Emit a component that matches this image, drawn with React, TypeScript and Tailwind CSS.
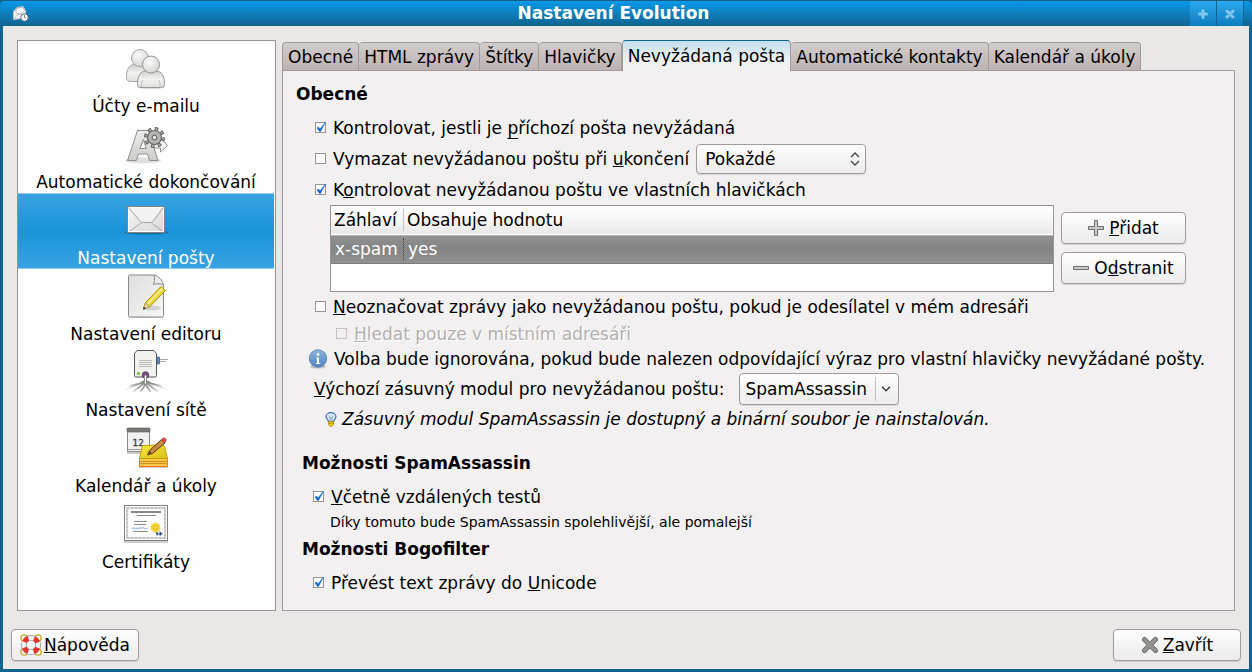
import { useId, useState, type ReactNode } from "react";

function Mnemonic({ text, at }: { text: string; at: number }) {
  const letter = text.charAt(at);
  const hasDescender = "gjpqy".includes(letter);
  return (
    <>
      {text.slice(0, at)}
      <u
        className={
          hasDescender
            ? "underline decoration-1 underline-offset-4 [text-decoration-skip-ink:none]"
            : "underline decoration-1 underline-offset-1 [text-decoration-skip-ink:none]"
        }
      >
        {letter}
      </u>
      {text.slice(at + 1)}
    </>
  );
}

/* ---------- sidebar icons ---------- */

function AccountsIcon() {
  return (
    <svg viewBox="2 -1 48 48" className="size-12" aria-hidden="true">
      <defs>
        <linearGradient id="acc-body" x1="0" y1="0" x2="0" y2="1">
          <stop offset="0" stopColor="#cfcfcd" />
          <stop offset=".5" stopColor="#f2f2f1" />
          <stop offset="1" stopColor="#dededc" />
        </linearGradient>
        <radialGradient id="acc-head" cx=".4" cy=".35" r=".7">
          <stop offset="0" stopColor="#fafafa" />
          <stop offset="1" stopColor="#d4d4d1" />
        </radialGradient>
      </defs>
      <ellipse cx="31" cy="42" rx="14" ry="2" fill="#000" opacity=".15" />
      <path d="M11 36.500c-3 0-4.500-1-4.500-4C6.500 25 9 19.500 14 19.500h9c5 0 7 5 7 13 0 3-1 4-4 4z" fill="url(#acc-body)" stroke="#a9a7a5" />
      <circle cx="20" cy="13" r="8.500" fill="url(#acc-head)" stroke="#a9a7a5" />
      <path d="M21 42.500c-3 0-3.500-1.500-3.500-4 0-7 3-12.500 8-12.500h11c5 0 8 5.500 8 12.500 0 2.500-1 4-4 4z" fill="url(#acc-body)" stroke="#989694" />
      <path d="M21.500 42c-.5-4 .5-6 1.500-7M40 42c.5-4-.5-6-1.500-7" fill="none" stroke="#c0bfbd" />
      <circle cx="31" cy="19.500" r="8.500" fill="url(#acc-head)" stroke="#989694" />
    </svg>
  );
}

function AutocompleteIcon() {
  return (
    <svg viewBox="2 -1 48 48" className="size-12" aria-hidden="true">
      <defs>
        <linearGradient id="auto-a" x1="0" y1="0" x2="0" y2="1">
          <stop offset="0" stopColor="#eeeeec" />
          <stop offset="1" stopColor="#cbcdc9" />
        </linearGradient>
      </defs>
      <ellipse cx="23" cy="39.500" rx="18" ry="3" fill="#000" opacity=".13" />
      <path d="M34 20.500h6.500v-3.500l7 7.500-7 6.500v-4H34" fill="#f4f4f2" stroke="#8f918d" />
      <path fillRule="evenodd" d="M7.500 39.500 17.500 9.500h11l9.500 30h-8.500l-2-6.500H18.500l-2 6.500zM20 27.500h6l-2.500-9z" fill="url(#auto-a)" stroke="#8f918d" />
      <path d="M20 27.500h6l-2.500-9z" fill="#fff" stroke="#8f918d" />
      <circle cx="34.500" cy="16.500" r="8.500" fill="none" stroke="#555753" strokeWidth="4" strokeDasharray="3.300 3.376" />
      <circle cx="34.500" cy="16.500" r="7" fill="#a9aba7" stroke="#555753" />
      <circle cx="34.500" cy="16.500" r="8.500" fill="none" stroke="#a9aba7" strokeWidth="2.400" strokeDasharray="1.700 4.976" strokeDashoffset="-.8" />
      <circle cx="34.500" cy="16.500" r="4.800" fill="none" stroke="#c4c5c2" />
      <circle cx="34.500" cy="16.500" r="2.200" fill="#fff" stroke="#555753" />
    </svg>
  );
}

function MailIcon() {
  return (
    <svg viewBox="1 1 48 48" className="size-12" aria-hidden="true">
      <defs>
        <linearGradient id="mail-bg" x1="0" y1="0" x2="1" y2="1">
          <stop offset="0" stopColor="#f6f6f6" />
          <stop offset="1" stopColor="#d8d8d8" />
        </linearGradient>
      </defs>
      <ellipse cx="25" cy="37.500" rx="22" ry="2" fill="#000" opacity=".25" />
      <rect x="6.500" y="11.500" width="37" height="26" fill="url(#mail-bg)" stroke="#85857f" />
      <rect x="7.500" y="12.500" width="35" height="24" fill="none" stroke="#fff" />
      <path d="M9 36 21 27.500M41 36 30 27.500" stroke="#aaa" fill="none" />
      <path d="M7.500 12.500 19 26c1 1.300 2 1.500 3 1.500h7c1 0 2-.3 3-1.500l10.500-13.500" fill="#f2f2f2" stroke="#a0a09e" />
    </svg>
  );
}

function EditorIcon() {
  return (
    <svg viewBox="1 0 48 48" className="size-12" aria-hidden="true">
      <defs>
        <linearGradient id="ed-page" x1="0" y1="0" x2="1" y2="1">
          <stop offset="0" stopColor="#dedede" />
          <stop offset="1" stopColor="#f7f7f7" />
        </linearGradient>
      </defs>
      <rect x="8" y="43" width="34" height="3" fill="#000" opacity=".15" />
      <path d="M7.500 4.500c0-1 .5-1.500 1.500-1.500h24l9.500 9.500v31c0 1-.5 1.500-1.500 1.500H9c-1 0-1.500-.5-1.500-1.500z" fill="url(#ed-page)" stroke="#888a85" />
      <path d="M33 3c1 4 .5 7-.5 9.500 3-1 6-1 10 0C41 8 38 4 33 3z" fill="#eee" stroke="#888a85" />
      <ellipse cx="31" cy="36" rx="9" ry="2.500" fill="#000" opacity=".12" />
      <path d="m22.500 37 2-6.500L40 14.500l4.500 4L28.500 35z" fill="#e9d33c" stroke="#b0980a" />
      <path d="m26.500 32 15-15.500" stroke="#fbf0a0" strokeWidth="1.500" />
      <path d="m22.500 37 2-6.500 4 4.500z" fill="#e8d7a4" stroke="#a08e4c" strokeWidth=".7" />
      <path d="m22 37.500.8-2.800 2 2z" fill="#222" />
    </svg>
  );
}

function NetworkIcon() {
  return (
    <svg viewBox="1 0 48 48" className="size-12" aria-hidden="true">
      <defs>
        <radialGradient id="net-fade" gradientUnits="userSpaceOnUse" cx="24.500" cy="31" r="20">
          <stop offset="0" stopColor="#6f716d" />
          <stop offset=".55" stopColor="#a2a4a0" />
          <stop offset="1" stopColor="#c8c9c6" stopOpacity=".3" />
        </radialGradient>
      </defs>
      <path d="M36 11.500h11M36 13.500h9" stroke="#aaa" />
      <rect x="36" y="9" width="2.500" height="7" fill="#5b93cf" stroke="#204a87" strokeWidth=".6" />
      <g stroke="url(#net-fade)" fill="none" strokeWidth="1.600">
        <path d="M24.500 33C20 37 12 36 5 42" />
        <path d="M24.500 33c4.500 4 12 3 19.500 8" />
        <path d="M24 34c-3 4-8 6-12 10M25 34c3 4 8 6 12 10" />
        <path d="M24.500 35c-1 4-3 6-5 9M24.500 35c1 4 3 6 5 9" />
        <path d="M23 33c-5 4-10 3-14 5M26 33c5 4 10 3 14 5" />
      </g>
      <path d="M13.500 5.500 16 2.500h17l2.500 3v22c0 1-.5 1.500-1.500 1.500H15c-1 0-1.500-.5-1.500-1.500z" fill="#f1f1f0" stroke="#555753" />
      <path d="M18 12.500h13M18 14.500h13M18 16.500h13M18 18.500h13" stroke="#babdb6" />
      <circle cx="17.500" cy="25.500" r="1.600" fill="#73c21d" />
      <circle cx="24.500" cy="27" r="3.300" fill="#75507b" stroke="#4c2f51" strokeWidth=".7" />
      <path d="M24.500 27.500v7" stroke="#777" strokeWidth="3" />
      <path d="M24.500 27.500v8" stroke="#fff" strokeWidth="1.400" />
    </svg>
  );
}

function CalendarIcon() {
  return (
    <svg viewBox="1 0 48 48" className="size-12" aria-hidden="true">
      <defs>
        <linearGradient id="cal-note" x1="0" y1="0" x2="1" y2="1">
          <stop offset="0" stopColor="#f7e93b" />
          <stop offset="1" stopColor="#dcbf1a" />
        </linearGradient>
      </defs>
      <rect x="6" y="27" width="22" height="3" fill="#000" opacity=".2" />
      <rect x="6.500" y="4.500" width="22" height="23" fill="#f2f2f2" stroke="#888a85" />
      <rect x="6" y="4" width="23" height="4" rx="1" fill="#777975" stroke="#555753" strokeWidth=".6" />
      <path d="M7 25.500h21" stroke="#9a9c98" />
      <text x="11.500" y="21.500" fontSize="9" fontFamily="DejaVu Sans" fill="#3c3e3b" stroke="#3c3e3b" strokeWidth=".3">12</text>
      <rect x="18" y="41" width="29" height="3" fill="#000" opacity=".2" />
      <path d="M18.500 34.500h28v8h-28z" fill="#fcc64a" stroke="#f57900" />
      <path d="M19.500 37.500h26M19.500 39.500h26" stroke="#d48c1c" />
      <path d="m21.500 21.500 20-.5c1 0 1.500.5 2 1.500l3 12h-28z" fill="url(#cal-note)" stroke="#c4a000" />
      <path d="m26.500 31 2-4.500L40.500 15.500l3.500 3.500L31.500 29.500z" fill="#c78a44" stroke="#5f3b0c" />
      <path d="m40.500 15.500 2-1.500c1.500-.5 3 1 2.500 3l-1.500 2z" fill="#ef4a4a" stroke="#7d3d2d" strokeWidth=".7" />
      <path d="m26.500 31 2-4.500 3 3z" fill="#6e5225" />
    </svg>
  );
}

function CertificateIcon() {
  return (
    <svg viewBox="1 0 48 48" className="size-12" aria-hidden="true">
      <rect x="3" y="40" width="44" height="3" fill="#000" opacity=".18" />
      <rect x="3.500" y="5.500" width="43" height="35" fill="#fdfdfd" stroke="#7f817d" />
      <rect x="6" y="8" width="38" height="30" fill="none" stroke="#d3d4d1" strokeWidth="2" />
      <rect x="6" y="8" width="38" height="30" fill="none" stroke="#b0b2ae" strokeWidth="1" strokeDasharray="2 2" />
      <path d="M10 12h30" stroke="#888" strokeWidth="2" />
      <path d="M16 15.500h19M13 21.500h13M13 24.500h12M12 31.500h15" stroke="#8a8a8a" />
      <path d="m11 29 2-1.500 1 1.500 2-1 1 1 2-1.500 1 1 2-1 2 1.500 3-1" fill="none" stroke="#a9c4e4" strokeWidth="1.200" />
      <path d="m34 30 2 6 1.500-2 1 2V31zM37 30l5 4-2 .5V36l-4-4z" fill="#204a87" />
      <circle cx="34.500" cy="27.500" r="4.500" fill="#fbdc42" stroke="#e8c52a" strokeDasharray="1.500 .8" />
      <circle cx="34.500" cy="27.500" r="2.200" fill="none" stroke="#e0b413" />
    </svg>
  );
}

/* ---------- small icons ---------- */

function WindowIcon() {
  return (
    <svg viewBox="0 0 16 16" className="size-4" aria-hidden="true">
      <path d="M.5 5.500 4 1.500l6-1 2.500 4v7.500l-12 1.500z" fill="#f4f4f4" stroke="#c5c5c0" />
      <path d="m2.500 5 2-3 5.500-.8 1.500 3.300-3.500 3.500h-3z" fill="#fff" stroke="#a8a8a4" strokeWidth=".8" />
      <path d="m1 13 4-5h3.500l3.500 3" fill="none" stroke="#a8a8a4" strokeWidth=".8" />
      <circle cx="11.500" cy="11.500" r="3.800" fill="#fff" stroke="#4a6a9a" />
      <path d="M11.500 9v2.500l1.500 1" fill="none" stroke="#777" />
    </svg>
  );
}

function AddIcon() {
  return (
    <svg viewBox="0 0 16 16" className="size-4" aria-hidden="true">
      <path d="M6.500.5h3v6h6v3h-6v6h-3v-6h-6v-3h6z" fill="#c9cac8" stroke="#6b6d69" />
    </svg>
  );
}

function RemoveIcon() {
  return (
    <svg viewBox="0 0 16 16" className="size-4" aria-hidden="true">
      <path d="M.5 6.500h15v3H.5z" fill="#c9cac8" stroke="#6b6d69" />
    </svg>
  );
}

function CloseIcon() {
  return (
    <svg viewBox="0 0 18 18" className="size-[18px]" aria-hidden="true">
      <path d="M3.500 3.500 14.500 14.500M14.500 3.500 3.500 14.500" stroke="#6b6d6a" strokeWidth="5" strokeLinecap="round" />
      <path d="M3.500 3.500 14.500 14.500M14.500 3.500 3.500 14.500" stroke="#92948f" strokeWidth="3.200" strokeLinecap="round" />
    </svg>
  );
}

function HelpIcon() {
  return (
    <svg viewBox="0 0 22 22" className="size-[22px]" aria-hidden="true">
      <g fill="none" stroke="#c9a91c" strokeWidth="1.300">
        <circle cx="4" cy="4" r="3.200" />
        <circle cx="18" cy="4" r="3.200" />
        <circle cx="4" cy="18" r="3.200" />
        <circle cx="18" cy="18" r="3.200" />
      </g>
      <circle cx="11" cy="11" r="7.200" fill="none" stroke="#8c8e8a" strokeWidth="5.600" />
      <circle cx="11" cy="11" r="7.200" fill="none" stroke="#f3f3f2" strokeWidth="4.200" />
      <circle cx="11" cy="11" r="7.200" fill="none" stroke="#e8312c" strokeWidth="4.800" strokeDasharray="5.600 5.710" strokeDashoffset="-2.850" />
    </svg>
  );
}

function InfoIcon() {
  return (
    <svg viewBox="0 0 20 20" className="size-5 shrink-0" aria-hidden="true">
      <defs>
        <linearGradient id="info-bg" x1="0" y1="0" x2="0" y2="1">
          <stop offset="0" stopColor="#8fb3dc" />
          <stop offset="1" stopColor="#4f84c0" />
        </linearGradient>
      </defs>
      <ellipse cx="10" cy="17.500" rx="8" ry="2" fill="#000" opacity=".2" />
      <circle cx="10" cy="9.500" r="8.700" fill="url(#info-bg)" stroke="#5d8abc" />
      <circle cx="10" cy="5.500" r="1.400" fill="#fff" />
      <path d="M8 8.500h3v5.500h1.200v1H7.800v-1H9V9.500H8z" fill="#fff" />
    </svg>
  );
}

function BulbIcon() {
  return (
    <svg viewBox="0 0 12 15" className="h-[15px] w-3 shrink-0" aria-hidden="true">
      <path d="M1 4.500C1 2.500 3 .7 6 .7s5 1.800 5 3.800c0 2-2 2.800-2.500 5h-5C3 7.300 1 6.500 1 4.500z" fill="#dbe8f8" stroke="#3a6fb5" strokeWidth="1.200" />
      <path d="M4 3.500 5 6h2l1-2.500M5 6v3M7 6v3" fill="none" stroke="#6c97cf" strokeWidth=".8" />
      <path d="M3.500 9.500h5v3L7 14.300H5L3.500 12.500z" fill="#f2d21d" stroke="#a8860a" strokeWidth=".8" />
      <path d="M3.500 11.300h5" stroke="#a8860a" strokeWidth=".8" />
    </svg>
  );
}

/* ---------- controls ---------- */

function CheckRow({
  text,
  at,
  initial = false,
  disabled = false,
}: {
  text: string;
  at: number;
  initial?: boolean;
  disabled?: boolean;
}) {
  const [checked, setChecked] = useState(initial);
  const id = useId();
  return (
    <div className="flex items-center gap-[7px]">
      <span className="mb-px grid size-[11px] shrink-0">
        <input
          id={id}
          type="checkbox"
          checked={checked}
          disabled={disabled}
          onChange={(e) => setChecked(e.target.checked)}
          className="col-start-1 row-start-1 size-[11px] appearance-none border border-[#9c9292] bg-white disabled:border-[#c6c1c1] disabled:bg-transparent"
        />
        {checked && (
          <svg viewBox="0 0 11 11" className="pointer-events-none col-start-1 row-start-1 size-[11px] overflow-visible" aria-hidden="true">
            <path d="m2 6 1.500-1 1.500 2L10.500 0 5.500 9.500H4.500z" fill="#1467cf" stroke="#1467cf" strokeWidth=".6" />
          </svg>
        )}
      </span>
      <label
        htmlFor={id}
        className={
          disabled
            ? "whitespace-nowrap text-[#b3b0b0] [text-shadow:1px_1px_0_#fff]"
            : "whitespace-nowrap text-black"
        }
      >
        <Mnemonic text={text} at={at} />
      </label>
    </div>
  );
}

function PushButton({ children, className }: { children: ReactNode; className: string }) {
  return (
    <button
      type="button"
      className={`flex h-8 items-center justify-center rounded-[4px] border border-[#a29a9a] bg-linear-to-b from-white via-[#f3f2f2] via-60% to-[#eeecec] shadow-[0_1px_1px_rgba(0,0,0,0.12)] ${className}`}
    >
      {children}
    </button>
  );
}

const sections = [
  { name: "Účty e-mailu", icon: <AccountsIcon /> },
  { name: "Automatické dokončování", icon: <AutocompleteIcon /> },
  { name: "Nastavení pošty", icon: <MailIcon /> },
  { name: "Nastavení editoru", icon: <EditorIcon /> },
  { name: "Nastavení sítě", icon: <NetworkIcon /> },
  { name: "Kalendář a úkoly", icon: <CalendarIcon /> },
  { name: "Certifikáty", icon: <CertificateIcon /> },
];

const tabs = [
  "Obecné",
  "HTML zprávy",
  "Štítky",
  "Hlavičky",
  "Nevyžádaná pošta",
  "Automatické kontakty",
  "Kalendář a úkoly",
];

const selectClass =
  "col-start-1 row-start-1 w-full appearance-none rounded-[4px] border border-[#a29a9a] bg-linear-to-b from-white via-[#f3f2f2] via-60% to-[#eeecec] shadow-[0_1px_1px_rgba(0,0,0,0.12)]";

export default function App() {
  const [section, setSection] = useState("Nastavení pošty");
  const [tab, setTab] = useState("Nevyžádaná pošta");

  return (
    <div className="flex min-h-screen flex-col bg-[#11648f] font-['DejaVu_Sans',sans-serif] text-[17px]/[22px] text-black">
      <header className="flex h-[26px] items-stretch rounded-t-[5px] border-t border-[#1b5f86] bg-linear-to-b from-[#0499ea] to-[#11648f] pl-[13px] pr-2">
        <div className="flex w-6 items-center">
          <WindowIcon />
        </div>
        <h1 className="flex-1 text-center text-[17px]/[24px] font-bold text-white">Nastavení Evolution</h1>
        <button type="button" aria-label="Maximalizovat" className="flex w-[27px] items-center justify-center border-r border-[#11648f] bg-linear-to-b from-[#2ba9f2] to-[#0c7dbb]">
          <svg viewBox="0 0 10 10" className="size-[10px]" aria-hidden="true">
            <path d="M5 1.500v7M1.500 5h7" stroke="#84c6ec" strokeWidth="3" strokeLinecap="round" />
          </svg>
        </button>
        <button type="button" aria-label="Zavřít okno" className="flex w-[27px] items-center justify-center border-r border-[#11648f] bg-linear-to-b from-[#2ba9f2] to-[#0c7dbb]">
          <svg viewBox="0 0 10 10" className="size-[10px]" aria-hidden="true">
            <path d="m2 2 6 6M8 2 2 8" stroke="#84c6ec" strokeWidth="3" strokeLinecap="round" />
          </svg>
        </button>
      </header>

      <div className="mx-[3px] mb-[3px] flex flex-1 flex-col bg-[#e9e8e6]">
        <div className="flex flex-1 gap-[6px] pl-[14px] pr-[14px] pt-[14px]">
          <nav className="flex w-[259px] shrink-0 flex-col border border-[#9c9292] bg-linear-to-br from-white to-[#fdfdfd] pr-px">
            {sections.map(({ name, icon }) => (
              <button
                key={name}
                type="button"
                aria-current={name === section}
                onClick={() => setSection(name)}
                className={
                  name === section
                    ? "flex h-[76px] flex-col items-center justify-end gap-1 border-y border-[#8fcdf1] bg-linear-to-b from-[#37a3e2] via-[#1994d8] to-[#37a3e2] text-white"
                    : "flex h-[76px] flex-col items-center justify-end gap-1 border-y border-transparent"
                }
              >
                {icon}
                <span className="leading-5">{name}</span>
              </button>
            ))}
          </nav>

          <main className="flex min-w-0 flex-1 flex-col">
            <div role="tablist" className="flex h-[30px] shrink-0 items-end">
              {tabs.map((name) => (
                <button
                  key={name}
                  type="button"
                  role="tab"
                  aria-selected={name === tab}
                  onClick={() => setTab(name)}
                  className={
                    name === tab
                      ? "z-10 -mb-px h-[31px] rounded-t-[4px] border-x border-t border-[#a29a9a] border-t-[#11648f] bg-linear-to-b from-[#c3e0f0] to-[#f2f1f1] to-70% px-[5px] whitespace-nowrap"
                      : "h-[28px] rounded-t-[4px] border-r border-t border-[#a29a9a] bg-linear-to-b from-[#d3cdcd] to-[#bcb2b2] px-[5px] whitespace-nowrap first:border-l"
                  }
                >
                  {name}
                </button>
              ))}
            </div>

            <section role="tabpanel" className="flex-1 border border-[#a29a9a] bg-[#f2f0f1] pb-3 pl-[13px] pr-5 pt-3">
              <h2 className="font-bold">Obecné</h2>
              <div className="mt-2 pl-[19px]">
                <div className="flex h-[30px] items-center">
                  <CheckRow text="Kontrolovat, jestli je příchozí pošta nevyžádaná" at={23} initial />
                </div>
                <div className="flex h-8 items-center gap-[7px]">
                  <CheckRow text="Vymazat nevyžádanou poštu při ukončení" at={30} />
                  <span className="grid w-[170px] items-center">
                    <select aria-label="Interval mazání" className={`${selectClass} h-[30px] pl-2`}>
                      <option>Pokaždé</option>
                      <option>Denně</option>
                      <option>Týdně</option>
                      <option>Měsíčně</option>
                    </select>
                    <svg viewBox="0 0 10 14" className="pointer-events-none col-start-1 row-start-1 mr-[6px] h-[14px] w-[10px] justify-self-end" aria-hidden="true">
                      <path d="m1 5 4-4 4 4M1 9l4 4 4-4" fill="none" stroke="#444" strokeWidth="1.300" />
                    </svg>
                  </span>
                </div>
                <div className="flex h-[30px] items-center">
                  <CheckRow text="Kontrolovat nevyžádanou poštu ve vlastních hlavičkách" at={1} initial />
                </div>

                <div className="flex gap-[7px] pl-[15px] pr-7">
                  <div className="h-[87px] flex-1 border border-[#9c9292] bg-white">
                    <table className="w-full border-collapse text-left">
                      <thead>
                        <tr className="h-[29px] border-b border-[#b5b1b1] bg-linear-to-b from-white via-[#f6f6f6] to-[#e9e7e7]">
                          <th className="w-[73px] p-0 font-normal">
                            <div className="border-r border-[#c4c0c0] pl-[3px]">Záhlaví</div>
                          </th>
                          <th className="p-0 pl-[3px] font-normal">Obsahuje hodnotu</th>
                        </tr>
                      </thead>
                      <tbody>
                        <tr className="h-7 border-b border-[#7b7b7b] bg-linear-to-b from-[#929292] via-[#848484] to-[#909090] text-white">
                          <td className="p-0">
                            <div className="border-r border-dotted border-[#444] pl-1">x-spam</div>
                          </td>
                          <td className="p-0 pl-1">yes</td>
                        </tr>
                      </tbody>
                    </table>
                  </div>
                  <div className="flex w-[125px] flex-col gap-2 pt-[7px]">
                    <PushButton className="gap-[5px]">
                      <AddIcon />
                      <span>
                        <Mnemonic text="Přidat" at={0} />
                      </span>
                    </PushButton>
                    <PushButton className="gap-[5px]">
                      <RemoveIcon />
                      <span>
                        <Mnemonic text="Odstranit" at={1} />
                      </span>
                    </PushButton>
                  </div>
                </div>

                <div className="flex h-[30px] items-center">
                  <CheckRow text="Neoznačovat zprávy jako nevyžádanou poštu, pokud je odesílatel v mém adresáři" at={0} />
                </div>
                <div className="flex h-6 items-center pl-[21px]">
                  <CheckRow text="Hledat pouze v místním adresáři" at={0} disabled />
                </div>
              </div>

              <div className="flex h-[26px] items-center gap-[6px] pl-3">
                <InfoIcon />
                <p className="whitespace-nowrap">
                  Volba bude ignorována, pokud bude nalezen odpovídající výraz pro vlastní hlavičky nevyžádané pošty.
                </p>
              </div>
              <div className="flex h-[34px] items-center gap-[15px] pl-[18px]">
                <label htmlFor="plugin">
                  <Mnemonic text="Výchozí zásuvný modul pro nevyžádanou poštu:" at={0} />
                </label>
                <span className="grid w-40 items-center">
                  <select id="plugin" className={`${selectClass} h-8 pl-[5px]`}>
                    <option>SpamAssassin</option>
                    <option>Bogofilter</option>
                  </select>
                  <span className="pointer-events-none col-start-1 row-start-1 flex h-6 items-center justify-self-end border-l border-[#c4c0c0] pl-[5px] pr-2">
                    <svg viewBox="0 0 10 6" className="h-[6px] w-[10px]" aria-hidden="true">
                      <path d="m1 .8 4 4 4-4" fill="none" stroke="#333" strokeWidth="1.300" />
                    </svg>
                  </span>
                </span>
              </div>
              <div className="flex h-[26px] items-center gap-[5px] pl-[29px]">
                <BulbIcon />
                <p className="italic">Zásuvný modul SpamAssassin je dostupný a binární soubor je nainstalován.</p>
              </div>

              <div className="mt-5 pl-[6px]">
                <h2 className="font-bold">Možnosti SpamAssassin</h2>
                <div className="mt-2 flex h-[30px] items-center pl-[11px]">
                  <CheckRow text="Včetně vzdálených testů" at={0} initial />
                </div>
                <p className="pl-7 text-sm/[20px]">Díky tomuto bude SpamAssassin spolehlivější, ale pomalejší</p>
                <h2 className="mt-[6px] font-bold">Možnosti Bogofilter</h2>
                <div className="mt-2 flex h-[30px] items-center pl-[11px]">
                  <CheckRow text="Převést text zprávy do Unicode" at={23} initial />
                </div>
              </div>
            </section>
          </main>
        </div>

        <footer className="flex justify-between px-2 pb-2 pt-[18px]">
          <PushButton className="w-32 gap-[2px]">
            <HelpIcon />
            <span>
              <Mnemonic text="Nápověda" at={0} />
            </span>
          </PushButton>
          <PushButton className="w-32 gap-1">
            <CloseIcon />
            <span>
              <Mnemonic text="Zavřít" at={0} />
            </span>
          </PushButton>
        </footer>
      </div>
    </div>
  );
}
